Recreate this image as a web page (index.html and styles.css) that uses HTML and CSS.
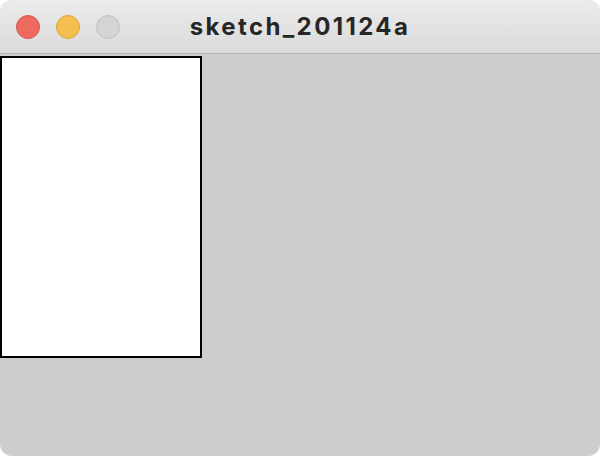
FILE: index.html
```html
<!DOCTYPE html>
<html>
<head>
<meta charset="utf-8">
<link rel="stylesheet" href="styles.css">
</head>
<body>
<div class="window">
  <div class="titlebar">
    <div class="lights">
      <span class="light red"></span>
      <span class="light yellow"></span>
      <span class="light grey"></span>
    </div>
    <div class="title">sketch_201124a</div>
  </div>
  <div class="content">
    <div class="canvas"></div>
  </div>
</div>
</body>
</html>
```
FILE: styles.css
```css
html, body {
  margin: 0;
  padding: 0;
  background: #ffffff;
}
.window {
  width: 600px;
  height: 456px;
  border-radius: 12px;
  overflow: hidden;
  background: #cdcdcd;
  display: flex;
  flex-direction: column;
}
.titlebar {
  position: relative;
  height: 53px;
  flex: none;
  background: linear-gradient(#ececec, #dadada);
  border-bottom: 1px solid #b6b6b6;
  display: flex;
  align-items: center;
  justify-content: center;
}
.lights {
  position: absolute;
  left: 16px;
  top: 15px;
  display: flex;
  gap: 16px;
}
.light {
  width: 24px;
  height: 24px;
  border-radius: 50%;
  box-sizing: border-box;
}
.red { background: #ee6a5f; border: 1px solid #d6574d; }
.yellow { background: #f5bf4f; border: 1px solid #d9a53e; }
.grey { background: #d4d4d4; border: 1px solid #c0c0c0; }
.title {
  font-family: Inter, "Liberation Sans", Arial, sans-serif;
  font-weight: 700;
  font-size: 24px;
  letter-spacing: 2.4px;
  line-height: 28px;
  color: #262626;
  margin-top: 1px;
}
.content {
  flex: 1;
  padding-top: 2px;
}
.canvas {
  width: 198px;
  height: 298px;
  background: #ffffff;
  border: 2px solid #000000;
}
```
